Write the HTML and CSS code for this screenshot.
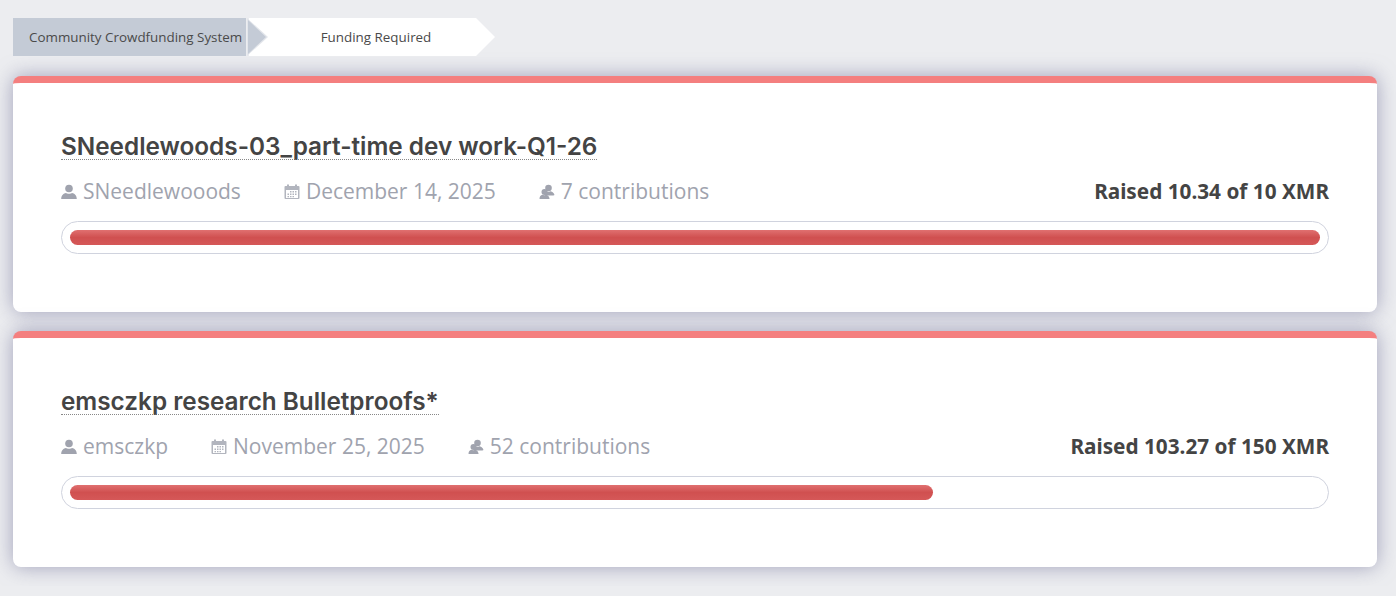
FILE: index.html
```html
<!DOCTYPE html>
<html>
<head>
	<title>Funding Required</title>
	<link rel="stylesheet" href="styles.css">
</head>
<body>
	<div class="crumbs">
		<a class="crumb crumb-home">Community Crowdfunding System</a>
		<a class="crumb crumb-current">Funding Required</a>
	</div>

	<div class="card">
		<h2 class="card-title"><span>SNeedlewoods-03_part-time dev work-Q1-26</span></h2>
		<div class="card-meta">
			<span class="meta-item">
				<svg class="icon" viewBox="0 0 16 16"><use href="#i-user"/></svg>SNeedlewooods
			</span>
			<span class="meta-item">
				<svg class="icon icon-cal" viewBox="0 0 16 16"><use href="#i-cal"/></svg>December 14, 2025
			</span>
			<span class="meta-item">
				<svg class="icon" viewBox="0 0 16 16"><use href="#i-users"/></svg>7 contributions
			</span>
			<span class="raised">Raised 10.34 of 10 XMR</span>
		</div>
		<div class="progress"><div class="progress-bar" style="width: 100%"></div></div>
	</div>

	<div class="card">
		<h2 class="card-title"><span>emsczkp research Bulletproofs*</span></h2>
		<div class="card-meta">
			<span class="meta-item">
				<svg class="icon" viewBox="0 0 16 16"><use href="#i-user"/></svg>emsczkp
			</span>
			<span class="meta-item">
				<svg class="icon icon-cal" viewBox="0 0 16 16"><use href="#i-cal"/></svg>November 25, 2025
			</span>
			<span class="meta-item">
				<svg class="icon" viewBox="0 0 16 16"><use href="#i-users"/></svg>52 contributions
			</span>
			<span class="raised">Raised 103.27 of 150 XMR</span>
		</div>
		<div class="progress"><div class="progress-bar" style="width: 69%"></div></div>
	</div>

	<!-- icons -->
	<svg class="icon-defs">
		<symbol id="i-user" viewBox="0 0 16 16">
			<circle cx="8" cy="4.500" r="3.800"/>
			<path d="M0.200 15c0-3.800 2.600-5.600 4.700-6 1 1 5.200 1 6.200 0 2.100.4 4.700 2.200 4.700 6z"/>
		</symbol>
		<symbol id="i-cal" viewBox="0 0 16 16">
			<path fill-rule="evenodd" d="M3 .5h2v1.500h6V.5h2v1.500h1.500a1 1 0 0 1 1 1V14a1 1 0 0 1-1 1h-13a1 1 0 0 1-1-1V3a1 1 0 0 1 1-1H3zM2 6v8h12V6z"/>
			<path d="M6 7h1.500v1.500H6zM8.500 7H10v1.500H8.500zM11 7h1.500v1.500H11zM3.500 9.500H5V11H3.500zM6 9.500h1.500V11H6zM8.500 9.500H10V11H8.500zM11 9.500h1.500V11H11zM3.500 12H5v1.300H3.500zM6 12h1.500v1.300H6zM8.500 12H10v1.300H8.500z"/>
		</symbol>
		<symbol id="i-users" viewBox="0 0 16 16">
			<circle cx="9.500" cy="4" r="3.300"/>
			<path d="M5.500 10.500c.2-2 1.500-3 2.500-3.200.8.700 2.300.7 3.100 0 1.400.3 4.100 1.300 4.400 3.700-.8.400-1.500.5-2 .5H6z"/>
			<circle cx="5.500" cy="8" r="3"/>
			<path d="M0.500 15c0-2.600 1.300-3.900 2.800-4.200.8.600 3.200.6 4 0 1.300.3 3.100 1.400 3.300 4.200z"/>
		</symbol>
	</svg>
</body>
</html>
```

FILE: styles.css
```css
body {
	margin: 0;
	padding: 18px 19px 0 13px;
	background-color: #ECEDF0;
	font-family: "Open Sans", "Noto Sans", sans-serif;
	color: #444444;
}

.crumbs {
	display: flex;
	margin-bottom: 20px;
}

.crumb {
	display: block;
	height: 38px;
	line-height: 38px;
	font-size: 13.4px;
	color: #4a4a4a;
	text-align: center;
}

.crumb-home {
	width: 233px;
	padding-left: 16px;
	box-sizing: border-box;
	text-align: left;
	white-space: nowrap;
	background: #C4CBD6;
	position: relative;
}

/* arrow sticking out of the first crumb, pale edge first and then the grey on top */
.crumb-home:before,
.crumb-home:after {
	content: "";
	position: absolute;
	z-index: 2;
	border-style: solid;
	border-color: transparent;
}

.crumb-home:before {
	left: calc(100% + 1px);
	top: 0;
	border-width: 19px 0 19px 21px;
	border-left-color: #E3E6EB;
}

.crumb-home:after {
	left: calc(100% + 2px);
	top: 2px;
	border-width: 17px 0 17px 18px;
	border-left-color: #C4CBD6;
}

.crumb-current {
	width: 246px;
	margin-left: 3px;
	padding-left: 8px;
	box-sizing: border-box;
	background: #ffffff;
	clip-path: polygon(0 0, calc(100% - 19px) 0, 100% 50%, calc(100% - 19px) 100%, 0 100%);
}

.card {
	height: 236px;
	margin-bottom: 19px;
	padding: 51px 48px 0;
	box-sizing: border-box;
	background: #ffffff;
	border-top: 7px solid #F47F7F;
	border-radius: 8px;
	box-shadow: 0 0 20px rgba(110, 110, 150, 0.6);
}

.card-title {
	margin: 0;
	font-family: Inter, "Noto Sans", sans-serif;
	font-size: 24.3px;
	font-weight: 600;
	line-height: 25px;
	color: #444444;
}

.card-title span {
	display: inline-block;
	border-bottom: 1px dotted #888888;
}

.card-meta {
	display: flex;
	align-items: center;
	gap: 43px;
	margin-top: 14px;
	height: 34px;
	font-size: 21px;
	color: #A0A3AE;
}

.meta-item {
	display: flex;
	align-items: center;
}

.icon {
	width: 16px;
	height: 16px;
	margin-top: 2px;
	margin-right: 6px;
	fill: #A0A3AE;
}

.icon-cal {
	opacity: 0.8;
}

.icon-defs {
	display: none;
}

.raised {
	margin-left: auto;
	font-family: "Noto Sans", "Open Sans", sans-serif;
	font-size: 20.75px;
	font-weight: 700;
	color: #444444;
}

.progress {
	height: 33px;
	margin-top: 13px;
	padding: 8px;
	box-sizing: border-box;
	border: 1px solid #D0D3DE;
	border-radius: 17px;
	background: #ffffff;
}

.progress-bar {
	height: 15px;
	border-radius: 8px;
	background: linear-gradient(#E07070, #D05050 50%, #D55858);
}
```
